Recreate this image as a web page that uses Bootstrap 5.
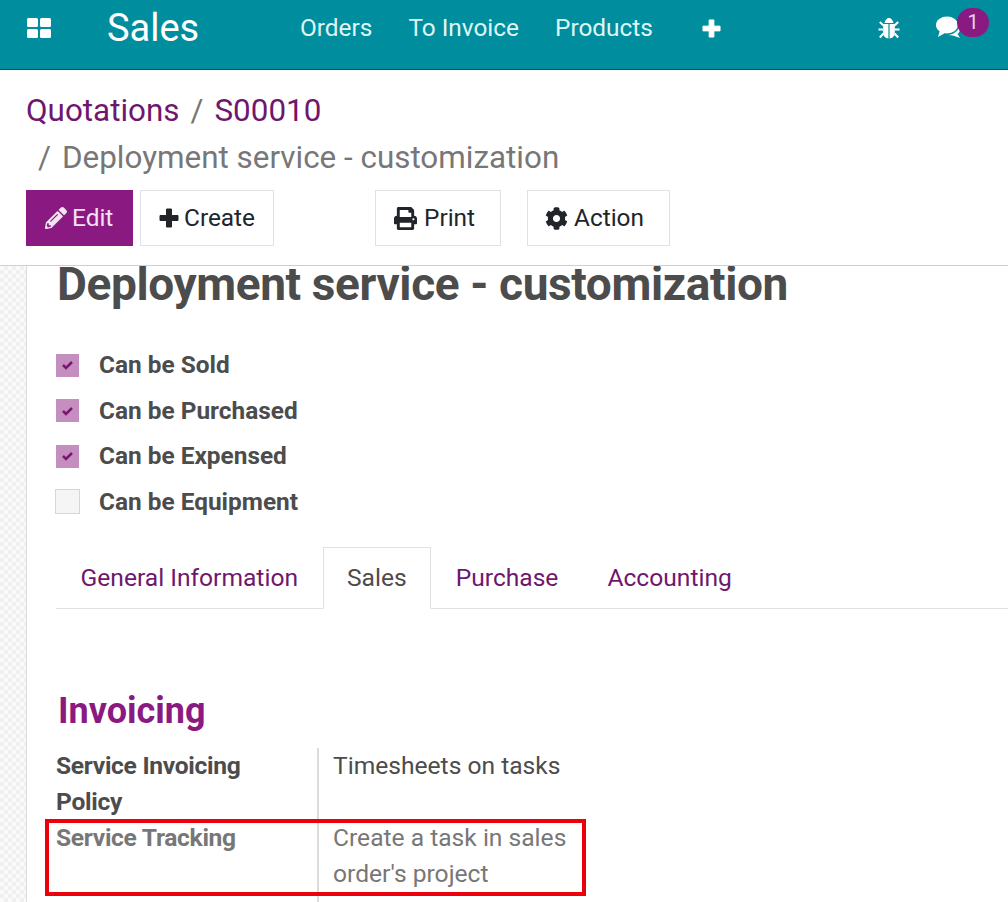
<!doctype html>
<html lang="en">
<head>
<meta charset="utf-8">
<title>Deployment service - customization</title>
<link rel="stylesheet" href="https://cdn.jsdelivr.net/npm/bootstrap@5.3.0/dist/css/bootstrap.min.css">
<style>
html,body{height:100%;overflow:hidden}
body{font-family:Roboto,"Liberation Sans",sans-serif;font-size:24.6px;line-height:36px;color:#212529;background:#fff}
.app-bar{height:70px;background:#008e9e;border-bottom:1px solid #00565f;padding:0;flex-wrap:nowrap;align-items:flex-start;flex:none;position:relative;z-index:2}
.apps-btn{width:80px;height:56px;padding:0 0 0 27px;display:flex;align-items:center}
.brand-name{color:#fff;font-size:38px;line-height:56px;padding:0;margin:0 0 0 27px;width:193px}
.app-menu{display:flex;gap:36px;align-items:center;height:56px}
.app-menu a{color:#dff6f6;font-size:24.4px;text-decoration:none;line-height:56px}
.plus-link{margin-left:13px;display:flex;align-items:center}
.plus-ico{fill:currentColor;stroke:currentColor;stroke-width:1;stroke-linejoin:round}
.app-right{margin-left:auto;display:flex;align-items:center;height:56px;position:relative;padding-right:44px;gap:36px}
.msg-count{position:absolute;right:19px;top:8px;width:32px;height:29px;border-radius:15px;background:#8a1a82;color:#e9d5e7;font-size:20px;line-height:29px;text-align:center;font-weight:400}
.ctl-panel{height:196px;border-bottom:1px solid #cfcfcf;padding:17px 26px 0;flex:none;position:relative;z-index:2;background:#fff}
.crumbs{font-size:31.4px;line-height:47px;margin:0;max-width:640px;--bs-breadcrumb-divider-color:#777;--bs-breadcrumb-item-padding-x:11px;--bs-breadcrumb-margin-bottom:0}
.crumbs a{color:#6f176e;text-decoration:none}
.crumbs .breadcrumb-item.active{color:#777}
.crumbs .breadcrumb-item+.breadcrumb-item::before{color:#777}
.crumbs .last-crumb{padding-left:12px}
.ctl-btns{margin-top:9px;display:flex;align-items:stretch}
.act-btn{height:56px;font-size:24.4px;line-height:1;border-radius:0;display:flex;align-items:center;justify-content:flex-start;gap:5px;padding:0 0 0 18px;background:#fff;border:1px solid #dee2e6;color:#212529}
.act-edit{width:107px;background:#8a1a82;border-color:#8a1a82;color:#f3e3f1}
.act-create{width:134px;margin-left:7px}
.act-print{width:126px;margin-left:101px;gap:7px}
.act-action{width:143px;margin-left:26px;padding-left:17px;gap:6px}
.act-btn svg{fill:currentColor;flex:none}
.work-area{flex:1;min-height:0;display:flex}
.side-strip{width:27px;flex:none;border-right:1px solid #dcdcdc;background-color:#fafafa;background-image:repeating-conic-gradient(#f0f0f0 0 25%,#fafafa 0 50%);background-size:8px 8px}
.sheet{flex:1;min-width:0;padding:0 0 0 29px}
.prod-title{font-size:46px;line-height:36px;font-weight:700;color:#4c4c4c;margin:0;white-space:nowrap;height:36px;letter-spacing:-.38px;padding-left:1px}
.opt-list{margin-top:40.4px;padding:0;list-style:none}
.opt-row{display:flex;align-items:center;height:45.5px;font-weight:700;font-size:24.4px;color:#4c4c4c}
.opt-box{width:23px;height:23px;background:#c48fbe;display:flex;align-items:center;justify-content:center;margin-right:20px;flex:none}
.opt-off{background:#f5f5f5;border:1px solid #d6d6d6;width:25px;height:25px;margin-left:-1px;margin-right:19px}
.sheet-tabs{margin-top:22.6px;--bs-nav-tabs-border-color:#dee2e6;--bs-nav-tabs-border-radius:0;--bs-nav-tabs-link-active-color:#4c4c4c;--bs-nav-tabs-link-active-border-color:#dee2e6 #dee2e6 #fff;--bs-nav-link-color:#6f176e;--bs-nav-link-hover-color:#6f176e;--bs-nav-tabs-link-hover-border-color:transparent;--bs-nav-link-padding-x:23.5px;--bs-nav-link-padding-y:12px;--bs-nav-link-font-size:24.6px;gap:0}
.sheet-tabs .nav-link{line-height:36px;height:62px}
.group-head{color:#8a1a82;font-size:36px;font-weight:700;line-height:48px;margin:78px 0 13px 2px}
.info-wrap{position:relative}
.info-row{display:flex;width:540px}
.info-key{width:263px;flex:none;font-weight:700;color:#4c4c4c;border-right:2px solid #dcdcdc;padding-right:20px;letter-spacing:-.3px}
.info-val{padding-left:14px;width:262px;color:#4c4c4c}
.info-faded .info-key,.info-faded .info-val{color:#777}
.info-tail{height:30px}
.red-frame{position:absolute;left:-11px;top:71px;width:541px;height:77px;border:4px solid #ec000c;pointer-events:none}
</style>
</head>
<body class="d-flex flex-column">
<nav class="navbar app-bar">
  <a class="apps-btn" href="#" aria-label="Apps"><svg width="25" height="20" viewBox="0 0 25 20" fill="#fff"><rect x="0" y="0" width="11" height="9" rx="1.5"/><rect x="13" y="0" width="11" height="9" rx="1.5"/><rect x="0" y="11" width="11" height="9" rx="1.5"/><rect x="13" y="11" width="11" height="9" rx="1.5"/></svg></a>
  <a class="navbar-brand brand-name" href="#">Sales</a>
  <div class="app-menu">
    <a href="#">Orders</a>
    <a href="#">To Invoice</a>
    <a href="#">Products</a>
    <a href="#" class="plus-link text-white" aria-label="Add"><svg class="plus-ico" width="19" height="19" viewBox="0 0 20 20"><path d="M7.500 1h5v6.500H19v5h-6.500V19h-5v-6.500H1v-5h6.500z"/></svg></a>
  </div>
  <div class="app-right">
    <svg width="22" height="22" viewBox="0 0 22 22" aria-label="Debug"><path fill="#fff" d="M6.500 6C7 3 9 1 11 1s4 2 4.500 5zM5.200 7h5.200v14.500C7.500 21.200 5.200 19 5.200 16zM11.600 7h5.200v9c0 3-2.300 5.200-5.200 5.500z"/><path fill="none" stroke="#fff" stroke-width="2" d="M5.500 8.500L1.800 5M.5 12.500h5M5.500 16.500L1.800 20.500M16.500 8.500L20.200 5M21.500 12.500h-5M16.500 16.500l3.700 4"/></svg>
    <svg width="28" height="24" viewBox="0 0 28 24" aria-label="Messages"><ellipse fill="#fff" cx="11" cy="9" rx="11" ry="8.500"/><path fill="#fff" d="M4 14l-2 7 8-4.500zM23.500 10c1.500 3 .5 6-2 8l2.500 4-7-2.500-5-.5c5-.5 10-3.500 11.500-9z"/></svg>
    <span class="msg-count">1</span>
  </div>
</nav>

<header class="ctl-panel">
  <ol class="breadcrumb crumbs">
    <li class="breadcrumb-item"><a href="#">Quotations</a></li>
    <li class="breadcrumb-item"><a href="#">S00010</a></li>
    <li class="breadcrumb-item active last-crumb" aria-current="page">Deployment service - customization</li>
  </ol>
  <div class="ctl-btns">
    <button type="button" class="btn act-btn act-edit"><svg width="22" height="22" viewBox="0 0 512 512"><path d="M497.9 142.1l-46.100 46.100c-4.700 4.700-12.300 4.700-17 0l-111-111c-4.700-4.700-4.700-12.300 0-17l46.100-46.100c18.700-18.700 49.100-18.700 67.900 0l60.100 60.100c18.800 18.700 18.800 49.100 0 67.900zM284.200 99.800L21.600 362.400.4 483.900c-2.900 16.400 11.400 30.600 27.800 27.800l121.500-21.300 262.600-262.600c4.700-4.700 4.700-12.300 0-17l-111-111c-4.800-4.700-12.400-4.700-17.100 0zM124.100 339.900c-5.500-5.500-5.500-14.300 0-19.800l154-154c5.500-5.500 14.300-5.500 19.800 0s5.500 14.300 0 19.800l-154 154c-5.500 5.500-14.300 5.500-19.800 0zM88 424h48v36.300l-64.500 11.300-31.100-31.100L51.700 376H88v48z"/></svg>Edit</button>
    <button type="button" class="btn act-btn act-create"><svg class="plus-ico" width="20" height="20" viewBox="0 0 20 20"><path d="M7.500 1h5v6.500H19v5h-6.500V19h-5v-6.500H1v-5h6.500z"/></svg>Create</button>
    <button type="button" class="btn act-btn act-print"><svg width="23" height="23" viewBox="0 0 512 512"><path d="M448 192V77.250c0-8.490-3.370-16.620-9.370-22.630L393.370 9.370c-6-6-14.140-9.370-22.630-9.370H96C78.330 0 64 14.330 64 32v160c-35.350 0-64 28.650-64 64v112c0 8.840 7.160 16 16 16h48v96c0 17.670 14.330 32 32 32h320c17.670 0 32-14.330 32-32v-96h48c8.840 0 16-7.160 16-16V256c0-35.350-28.650-64-64-64zm-64 256H128v-96h256v96zm0-224H128V64h192v48c0 8.840 7.160 16 16 16h48v96zm48 72c-13.250 0-24-10.750-24-24 0-13.260 10.750-24 24-24s24 10.740 24 24c0 13.250-10.750 24-24 24z"/></svg>Print</button>
    <button type="button" class="btn act-btn act-action"><svg width="23" height="23" viewBox="0 0 512 512"><path d="M487.400 315.700l-42.600-24.600c4.300-23.200 4.300-47 0-70.200l42.600-24.600c4.900-2.800 7.100-8.600 5.500-14-11.100-35.600-30-67.800-54.700-94.600-3.800-4.100-10-5.100-14.800-2.300L380.800 110c-17.900-15.400-38.500-27.300-60.800-35.100V25.800c0-5.600-3.900-10.500-9.400-11.700-36.700-8.200-74.300-7.800-109.200 0-5.500 1.200-9.400 6.100-9.400 11.700V75c-22.200 7.900-42.800 19.800-60.800 35.100L88.700 85.500c-4.900-2.800-11-1.900-14.800 2.300-24.700 26.700-43.600 58.900-54.700 94.600-1.700 5.400.6 11.200 5.500 14L67.300 221c-4.300 23.200-4.300 47 0 70.200l-42.600 24.600c-4.900 2.800-7.100 8.600-5.500 14 11.100 35.600 30 67.800 54.700 94.600 3.800 4.100 10 5.100 14.800 2.300l42.600-24.600c17.900 15.400 38.500 27.300 60.800 35.100v49.200c0 5.600 3.900 10.500 9.400 11.700 36.700 8.200 74.300 7.800 109.200 0 5.500-1.200 9.400-6.100 9.400-11.700v-49.200c22.200-7.900 42.800-19.800 60.800-35.100l42.600 24.600c4.900 2.800 11 1.900 14.800-2.300 24.700-26.700 43.600-58.900 54.700-94.600 1.500-5.500-.7-11.300-5.600-14.100zM256 336c-44.100 0-80-35.900-80-80s35.900-80 80-80 80 35.900 80 80-35.900 80-80 80z"/></svg>Action</button>
  </div>
</header>

<main class="work-area">
  <div class="side-strip"></div>
  <div class="sheet">
    <h1 class="prod-title">Deployment service - customization</h1>
    <ul class="opt-list">
      <li class="opt-row"><span class="opt-box"><svg width="13" height="10" viewBox="0 0 13 10"><path d="M2 5l3 3 6-6" fill="none" stroke="#7a1574" stroke-width="2.500"/></svg></span>Can be Sold</li>
      <li class="opt-row"><span class="opt-box"><svg width="13" height="10" viewBox="0 0 13 10"><path d="M2 5l3 3 6-6" fill="none" stroke="#7a1574" stroke-width="2.500"/></svg></span>Can be Purchased</li>
      <li class="opt-row"><span class="opt-box"><svg width="13" height="10" viewBox="0 0 13 10"><path d="M2 5l3 3 6-6" fill="none" stroke="#7a1574" stroke-width="2.500"/></svg></span>Can be Expensed</li>
      <li class="opt-row"><span class="opt-box opt-off"></span>Can be Equipment</li>
    </ul>
    <ul class="nav nav-tabs sheet-tabs">
      <li class="nav-item"><a class="nav-link" href="#">General Information</a></li>
      <li class="nav-item"><a class="nav-link active" href="#">Sales</a></li>
      <li class="nav-item"><a class="nav-link" href="#">Purchase</a></li>
      <li class="nav-item"><a class="nav-link" href="#">Accounting</a></li>
    </ul>
    <h2 class="group-head">Invoicing</h2>
    <div class="info-wrap">
      <div class="info-row"><div class="info-key">Service Invoicing Policy</div><div class="info-val">Timesheets on tasks</div></div>
      <div class="info-row info-faded"><div class="info-key">Service Tracking</div><div class="info-val">Create a task in sales order's project</div></div>
      <div class="info-row"><div class="info-key info-tail"></div></div>
      <div class="red-frame"></div>
    </div>
  </div>
</main>
<script src="https://cdn.jsdelivr.net/npm/bootstrap@5.3.0/dist/js/bootstrap.bundle.min.js"></script>
</body>
</html>
